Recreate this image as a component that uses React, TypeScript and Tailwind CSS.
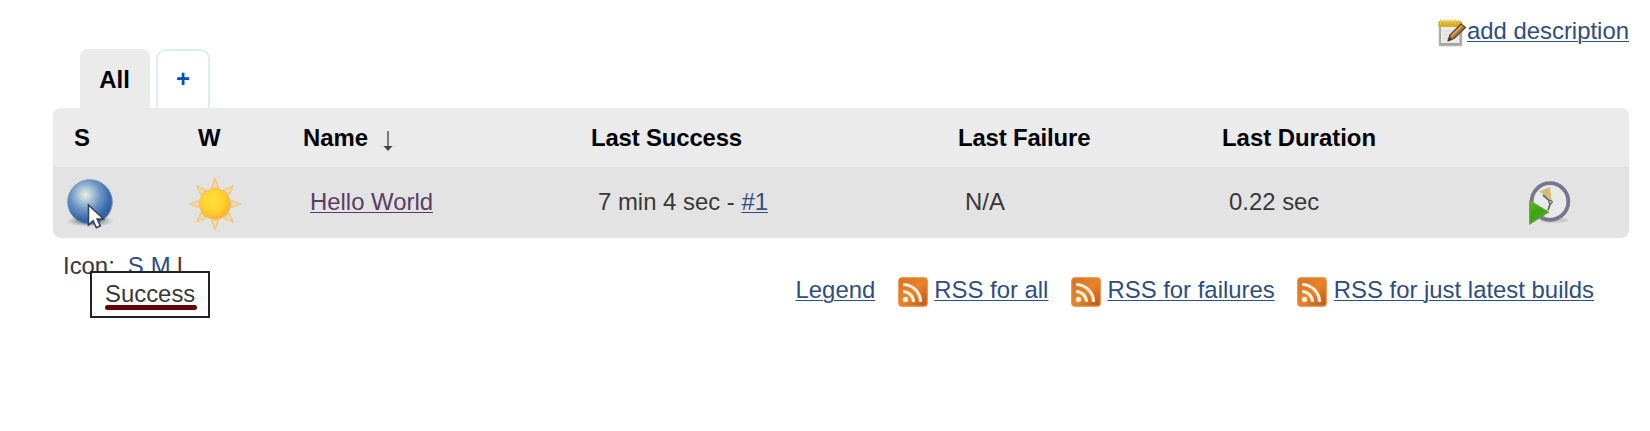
import React from 'react';

function Notepad() {
  return (
    <svg width="29" height="32" viewBox="0 -1 29 32" className="shrink-0">
      <path d="M1.500 5h22v22.500h-22z" fill="#a5a5a2" stroke="#b0b0ad" strokeWidth="1.500" strokeLinejoin="round" />
      <path d="M3 8h18.500v17H3z" fill="#ebebe8" />
      <path d="M5 13h11M5 16.500h8M5 20h5" stroke="#d6d6d3" strokeWidth="1.200" />
      <path d="M0.500 3h23v6H0.500z" fill="#dcae24" />
      <path d="M3 1.500v4M6.500 1.500v4M10 1.500v4M13.500 1.500v4M17 1.500v4M20.500 1.500v4" stroke="#ecca57" strokeWidth="1.800" />
      <path d="M10 23l2-6L23 6l4.500 3.500L16 20.500z" fill="#a87c38" stroke="#5c4828" strokeWidth="1.300" strokeLinejoin="round" />
      <path d="M13.500 18L24 7.500" stroke="#d8b06a" strokeWidth="1.600" />
      <path d="M10 23l1.500-4 2.500 2.300z" fill="#333" />
    </svg>
  );
}

function Ball() {
  return (
    <svg width="50" height="52" viewBox="0 0 50 52">
      <defs>
        <radialGradient id="ball" cx="0.4" cy="0.34" r="0.66">
          <stop offset="0" stopColor="#e9f0d8" />
          <stop offset="0.2" stopColor="#b9cedb" />
          <stop offset="0.5" stopColor="#6d96c6" />
          <stop offset="0.85" stopColor="#3566aa" />
          <stop offset="1" stopColor="#3a619c" />
        </radialGradient>
        <radialGradient id="shade">
          <stop offset="0.4" stopColor="#777" stopOpacity="0.8" />
          <stop offset="1" stopColor="#999" stopOpacity="0" />
        </radialGradient>
      </defs>
      <ellipse cx="25" cy="43" rx="24" ry="6" fill="url(#shade)" />
      <circle cx="25" cy="24" r="22.300" fill="url(#ball)" stroke="#7b94b6" strokeWidth="1" />
      <path d="M23.500 27v20l4.600-4.300 3.300 7 4-1.900-3.300-6.800h6.400z" fill="#fff" stroke="#34405a" strokeWidth="1.500" />
    </svg>
  );
}

const rays = [0, 45, 90, 135, 180, 225, 270, 315];

function Sun() {
  return (
    <svg width="54" height="54" viewBox="-27 -27 54 54">
      <defs>
        <radialGradient id="sun" cx="0.42" cy="0.38" r="0.62">
          <stop offset="0" stopColor="#ffe23f" />
          <stop offset="0.65" stopColor="#fecf2b" />
          <stop offset="1" stopColor="#f6b136" />
        </radialGradient>
      </defs>
      {rays.map((a) => (
        <path key={a} d="M-3.500-16L0-25.500L3.500-16z" transform={`rotate(${a})`} fill="#ecdcb8" stroke="#f2cb84" strokeWidth="1.800" strokeLinejoin="round" />
      ))}
      <circle r="15.300" fill="url(#sun)" stroke="#f6c067" strokeWidth="1.200" />
    </svg>
  );
}

function BuildClock() {
  return (
    <svg width="44" height="46" viewBox="0 0 44 46">
      <defs>
        <linearGradient id="go" x1="0" y1="0" x2="0.500" y2="1">
          <stop offset="0" stopColor="#67b43c" />
          <stop offset="0.500" stopColor="#3da60d" />
          <stop offset="1" stopColor="#5d9b36" />
        </linearGradient>
      </defs>
      <ellipse cx="27" cy="40" rx="14" ry="3" fill="#cacacc" />
      <circle cx="23" cy="21.500" r="18.300" fill="#e9e9e8" stroke="#77768f" strokeWidth="3.800" />
      <path d="M12 11.500l11-4.500 1.500 13z" fill="#d6bd72" />
      <path d="M16 15l8 7l-3 8" fill="none" stroke="#666" strokeWidth="1.800" />
      <circle cx="23.500" cy="22" r="1.800" fill="#bbb" stroke="#555" />
      <path d="M2.500 20.500L22 32L2.500 44.500z" fill="url(#go)" stroke="#66a344" strokeWidth="0.800" />
    </svg>
  );
}

function Rss() {
  return (
    <svg width="30" height="30" viewBox="0 0 30 30" className="mt-px shrink-0">
      <defs>
        <linearGradient id="rss" x1="0" y1="0" x2="1" y2="1">
          <stop offset="0" stopColor="#d97022" />
          <stop offset="0.500" stopColor="#ea8426" />
          <stop offset="1" stopColor="#bf5519" />
        </linearGradient>
      </defs>
      <rect x="0.800" y="0.800" width="28.400" height="28.400" rx="3" fill="url(#rss)" stroke="#e58a3c" strokeWidth="1.200" />
      <circle cx="7.500" cy="22.500" r="2.700" fill="#fdeedd" />
      <path d="M5 14.500a10.500 10.500 0 0 1 10.500 10.500M5 7.500a17.500 17.500 0 0 1 17.500 17.500" fill="none" stroke="#fdeedd" strokeWidth="3.200" />
    </svg>
  );
}

const link = 'text-[#2f4d7d] underline decoration-1 underline-offset-[2px]';
const columns = 'grid grid-cols-[124px_105px_287px_367px_264px_297px_105px] pl-[21px]';

export default function App() {
  return (
    <div className="h-[431px] overflow-hidden bg-white pl-[53px] pr-[21px] font-['Liberation_Sans',Arial,sans-serif] text-[23.9px] leading-[28px] text-[#383838]">
      <div className="flex h-[49px] items-start justify-end pt-[17px]">
        <div className="flex">
          <Notepad />
          <a className={link}>add description</a>
        </div>
      </div>
      <div className="flex h-[59px] gap-[6px] pl-[27px] font-bold">
        <div className="w-[70px] rounded-t-lg bg-[#ebebeb] pr-px pt-[17px] text-center text-black">All</div>
        <div className="w-[54px] rounded-t-[10px] border-2 border-b-0 border-[#dcebf8] pt-[14px] text-center text-[#0b4db5]">+</div>
      </div>
      <div className="h-[130px] overflow-hidden rounded-lg bg-[#e3e3e3]">
        <div className={`${columns} h-[60px] border-b border-[#dfdfdf] bg-[#ebebeb] pt-[16px] font-bold text-black`}>
          <span>S</span>
          <span>W</span>
          <span className="flex gap-[14px]">
            Name
            <svg width="12" height="24" viewBox="0 0 12 24" className="mt-[4px]">
              <path d="M6 3v19" stroke="#555" strokeWidth="1.500" />
              <path d="M1.500 18h9L6 23z" fill="#444" />
            </svg>
          </span>
          <span className="pl-px tracking-[-0.15px]">Last Success</span>
          <span className="pl-px tracking-[-0.15px]">Last Failure</span>
          <span className="pl-px">Last Duration</span>
        </div>
        <div className={`${columns} h-[70px] pt-[20px]`}>
          <span className="-ml-[9px] -mt-[10px]"><Ball /></span>
          <span className="-ml-[10px] -mt-[11px]"><Sun /></span>
          <span className="pl-[7px]"><a className="text-[#573d68] underline decoration-1 underline-offset-[2px]">Hello World</a></span>
          <span className="pl-[8px]">7 min 4 sec - <a className={link}>#1</a></span>
          <span className="pl-[8px]">N/A</span>
          <span className="pl-[8px]">0.22 sec</span>
          <span className="-mt-[8px] pl-[9px]"><BuildClock /></span>
        </div>
      </div>
      <div className="relative flex justify-between">
        <div className="flex gap-[14px] pl-[10px] pt-[14px]">
          <span>Icon:</span>
          <span className="-ml-px flex gap-[7px] text-[#2f4d7d]"><span>S</span><span>M</span><span className="-ml-px text-[#5a3030]">L</span></span>
        </div>
        <div className="flex pr-[35px] pt-[38px]">
          <a className={link}>Legend</a>
          <span className="ml-[23px] flex gap-[6px]"><Rss /><a className={link}>RSS for all</a></span>
          <span className="ml-[23px] flex gap-[6px]"><Rss /><a className={link}>RSS for failures</a></span>
          <span className="ml-[22px] flex gap-[7px]"><Rss /><a className={link}>RSS for just latest builds</a></span>
        </div>
        <div className="absolute left-[37px] top-[33px] h-[47px] w-[120px] border-2 border-[#222] bg-white pl-[13px] pt-[7px]">
          <div className="w-[92px]">Success</div>
          <div className="-mt-[3px] h-[5px] w-[92px] rounded-full bg-[#650207]" />
        </div>
      </div>
    </div>
  );
}
